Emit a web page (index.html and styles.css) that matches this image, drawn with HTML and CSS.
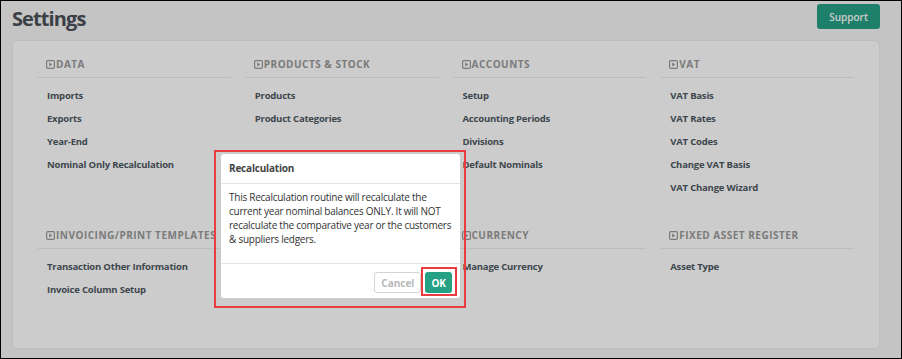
FILE: index.html
```html
<!DOCTYPE html>
<html lang="en">
<head>
    <meta charset="UTF-8">
    <meta name="viewport" content="width=device-width, initial-scale=1.0">
    <title>Settings</title>
    <link rel="stylesheet" href="styles.css">
</head>
<body>
    <div class="frame">
        <div class="top-bar">
            <h1 class="page-title">Settings</h1>
            <button class="support-button">Support</button>
        </div>

        <div class="panel">
            <div class="section">
                <div class="section-title"><svg class="section-icon" viewBox="0 0 9 9"><rect x="0.6" y="0.6" width="7.8" height="7.8" rx="1.2" fill="none" stroke="currentColor" stroke-width="1.2"/><path d="M3.2 2.4 L6.3 4.5 L3.2 6.6 Z" fill="currentColor"/></svg>DATA</div>
                <ul class="links">
                    <li>Imports</li>
                    <li>Exports</li>
                    <li>Year-End</li>
                    <li>Nominal Only Recalculation</li>
                </ul>
            </div>
            <div class="section">
                <div class="section-title"><svg class="section-icon" viewBox="0 0 9 9"><rect x="0.6" y="0.6" width="7.8" height="7.8" rx="1.2" fill="none" stroke="currentColor" stroke-width="1.2"/><path d="M3.2 2.4 L6.3 4.5 L3.2 6.6 Z" fill="currentColor"/></svg>PRODUCTS &amp; STOCK</div>
                <ul class="links">
                    <li>Products</li>
                    <li>Product Categories</li>
                </ul>
            </div>
            <div class="section">
                <div class="section-title"><svg class="section-icon" viewBox="0 0 9 9"><rect x="0.6" y="0.6" width="7.8" height="7.8" rx="1.2" fill="none" stroke="currentColor" stroke-width="1.2"/><path d="M3.2 2.4 L6.3 4.5 L3.2 6.6 Z" fill="currentColor"/></svg>ACCOUNTS</div>
                <ul class="links">
                    <li>Setup</li>
                    <li>Accounting Periods</li>
                    <li>Divisions</li>
                    <li>Default Nominals</li>
                </ul>
            </div>
            <div class="section">
                <div class="section-title"><svg class="section-icon" viewBox="0 0 9 9"><rect x="0.6" y="0.6" width="7.8" height="7.8" rx="1.2" fill="none" stroke="currentColor" stroke-width="1.2"/><path d="M3.2 2.4 L6.3 4.5 L3.2 6.6 Z" fill="currentColor"/></svg>VAT</div>
                <ul class="links">
                    <li>VAT Basis</li>
                    <li>VAT Rates</li>
                    <li>VAT Codes</li>
                    <li>Change VAT Basis</li>
                    <li>VAT Change Wizard</li>
                </ul>
            </div>
            <div class="section">
                <div class="section-title"><svg class="section-icon" viewBox="0 0 9 9"><rect x="0.6" y="0.6" width="7.8" height="7.8" rx="1.2" fill="none" stroke="currentColor" stroke-width="1.2"/><path d="M3.2 2.4 L6.3 4.5 L3.2 6.6 Z" fill="currentColor"/></svg>INVOICING/PRINT TEMPLATES</div>
                <ul class="links">
                    <li>Transaction Other Information</li>
                    <li>Invoice Column Setup</li>
                </ul>
            </div>
            <div class="section">
                <div class="section-title">&nbsp;</div>
                <ul class="links"></ul>
            </div>
            <div class="section">
                <div class="section-title"><svg class="section-icon" viewBox="0 0 9 9"><rect x="0.6" y="0.6" width="7.8" height="7.8" rx="1.2" fill="none" stroke="currentColor" stroke-width="1.2"/><path d="M3.2 2.4 L6.3 4.5 L3.2 6.6 Z" fill="currentColor"/></svg>CURRENCY</div>
                <ul class="links">
                    <li>Manage Currency</li>
                </ul>
            </div>
            <div class="section">
                <div class="section-title"><svg class="section-icon" viewBox="0 0 9 9"><rect x="0.6" y="0.6" width="7.8" height="7.8" rx="1.2" fill="none" stroke="currentColor" stroke-width="1.2"/><path d="M3.2 2.4 L6.3 4.5 L3.2 6.6 Z" fill="currentColor"/></svg>FIXED ASSET REGISTER</div>
                <ul class="links">
                    <li>Asset Type</li>
                </ul>
            </div>
        </div>

        <div class="backdrop"></div>

        <div class="modal">
            <div class="modal-header">Recalculation</div>
            <div class="modal-body">
                This Recalculation routine will recalculate the<br>
                current year nominal balances ONLY. It will NOT<br>
                recalculate the comparative year or the customers<br>
                &amp; suppliers ledgers.
            </div>
            <div class="modal-footer">
                <button class="btn btn-cancel">Cancel</button>
                <button class="btn btn-ok">OK</button>
            </div>
        </div>

        <div class="highlight highlight-modal"></div>
        <div class="highlight highlight-ok"></div>
    </div>
</body>
</html>
```

FILE: styles.css
```css
body {
    margin: 0;
    padding: 0;
    font-family: 'Open Sans', 'Noto Sans', sans-serif;
    background: #fff;
}
.frame {
    position: relative;
    width: 902px;
    height: 359px;
    box-sizing: border-box;
    border: 1px solid #000;
    background-color: #f5f5f5;
    overflow: hidden;
}
.top-bar {
    display: flex;
    justify-content: space-between;
    align-items: flex-start;
    padding: 3px 21px 0 11px;
    height: 37px;
    box-sizing: border-box;
}
.page-title {
    margin: 0;
    font-size: 20px;
    line-height: 30px;
    font-weight: 700;
    letter-spacing: -0.9px;
    color: #4a5059;
}
.support-button {
    height: 25px;
    width: 63px;
    padding: 0;
    border: none;
    border-radius: 3px;
    background-color: #26a085;
    color: #fff;
    font-family: inherit;
    font-size: 10px;
    font-weight: 600;
}
.panel {
    margin: 3px 22px 0 12px;
    height: 307px;
    box-sizing: border-box;
    background-color: #fff;
    border-radius: 4px;
    box-shadow: 0 0 2px rgba(0, 0, 0, 0.12);
    padding: 16px 25px;
    display: grid;
    grid-template-columns: repeat(4, 1fr);
    column-gap: 15px;
    row-gap: 29px;
    align-items: start;
    align-content: start;
}
.section-title {
    display: flex;
    align-items: center;
    gap: 1px;
    padding: 0 8px 6px;
    height: 14px;
    line-height: 14px;
    font-size: 10px;
    font-weight: 700;
    letter-spacing: 0.5px;
    color: #9a9a9a;
    white-space: nowrap;
    border-bottom: 1px solid #ececec;
}
.section-icon {
    width: 9px;
    height: 9px;
    flex-shrink: 0;
}
.links {
    list-style: none;
    margin: 0;
    padding: 6px 0 0 9px;
}
.links li {
    height: 23px;
    line-height: 23px;
    font-size: 9.5px;
    font-weight: 700;
    letter-spacing: -0.2px;
    color: #4e5862;
    white-space: nowrap;
}
.backdrop {
    position: absolute;
    inset: 0;
    background-color: rgba(0, 0, 0, 0.2);
}
.modal {
    position: absolute;
    left: 220px;
    top: 153px;
    width: 239px;
    height: 144px;
    background-color: #fff;
    border-radius: 3px;
    display: flex;
    flex-direction: column;
    color: #333;
}
.modal-header {
    height: 29px;
    line-height: 29px;
    padding: 0 8px;
    font-size: 10px;
    font-weight: 700;
    letter-spacing: -0.2px;
    color: #444;
    border-bottom: 1px solid #e5e5e5;
}
.modal-body {
    flex: 1;
    padding: 6px 8px 0;
    font-size: 10px;
    line-height: 14px;
    letter-spacing: -0.25px;
    color: #333;
    white-space: nowrap;
}
.modal-footer {
    display: flex;
    justify-content: flex-end;
    gap: 4px;
    height: 35px;
    box-sizing: border-box;
    padding: 8px 8px 0;
    border-top: 1px solid #e5e5e5;
}
.btn {
    height: 21px;
    padding: 0 6px;
    border-radius: 3px;
    font-family: inherit;
    font-size: 10px;
    font-weight: 700;
}
.btn-cancel {
    background-color: #fff;
    border: 1px solid #d4d4d4;
    color: #b8b8b8;
}
.btn-ok {
    background-color: #26a085;
    border: none;
    color: #fff;
}
.highlight {
    position: absolute;
    border: 2px solid #ea3b40;
    box-sizing: border-box;
}
.highlight-modal {
    left: 213px;
    top: 149px;
    width: 252px;
    height: 158px;
}
.highlight-ok {
    left: 420px;
    top: 266px;
    width: 36px;
    height: 29px;
}
```
